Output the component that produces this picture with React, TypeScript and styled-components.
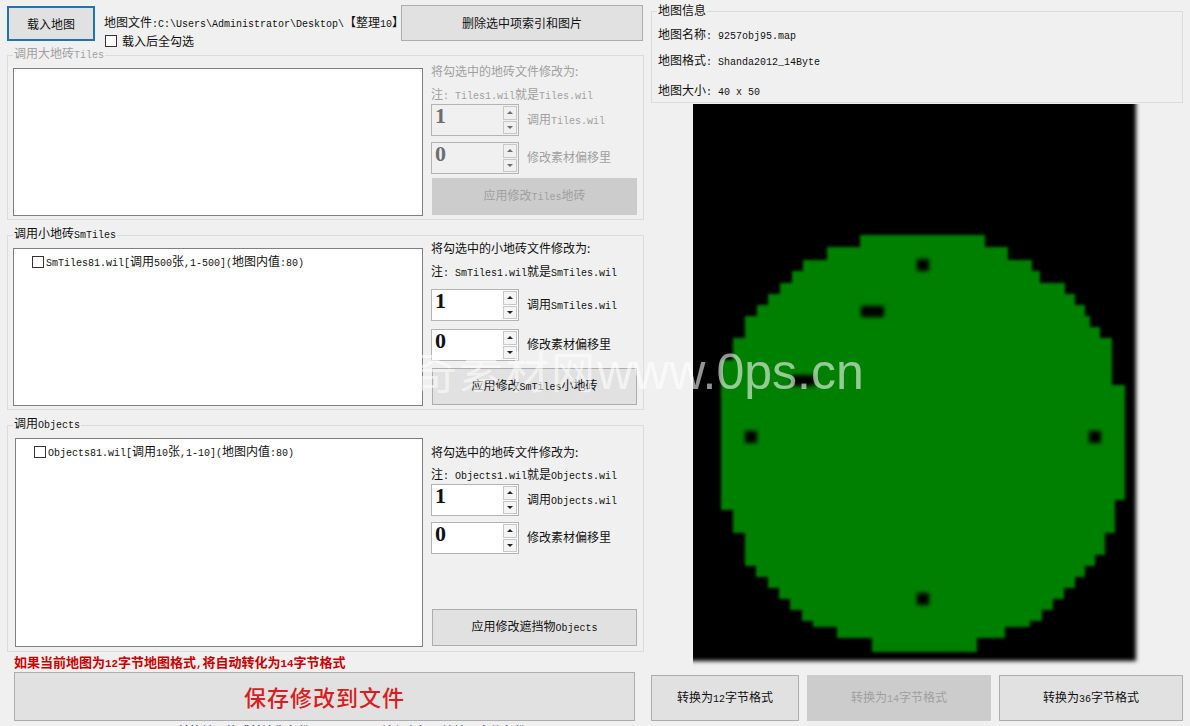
import React from "react";
import styled, { createGlobalStyle } from "styled-components";

const Global = createGlobalStyle`
  html, body { margin: 0; padding: 0; background: #f0f0f0; }
  body { font-family: "Noto Sans CJK SC", "Liberation Sans", sans-serif; font-size: 12px; color: #111; }
`;

const Root = styled.div`
  position: relative;
  width: 1190px;
  height: 726px;
  overflow: hidden;
  display: flex;
  background: #f0f0f0;
`;

const LeftColumn = styled.div`
  width: 637px;
  margin-left: 7px;
  padding-top: 5px;
  flex: none;
`;

const RightColumn = styled.div`
  width: 532px;
  margin-left: 7px;
  padding-top: 11px;
  flex: none;
`;

const TopRow = styled.div`
  display: flex;
  height: 50px;
`;

const BaseButton = styled.button<{ $w: number; $h: number; $off?: boolean }>`
  width: ${(p) => p.$w}px;
  height: ${(p) => p.$h}px;
  flex: none;
  padding: 0;
  box-sizing: border-box;
  font: inherit;
  line-height: 16px;
  background: ${(p) => (p.$off ? "#cccccc" : "#e1e1e1")};
  color: ${(p) => (p.$off ? "#a0a0a0" : "#111")};
  border: 1px solid ${(p) => (p.$off ? "#cccccc" : "#adadad")};
`;

const LoadButton = styled(BaseButton)`
  margin-top: 1px;
  border: 2px solid #1f74a8;
`;

const FileInfo = styled.div`
  width: 297px;
  margin-left: 9px;
  flex: none;
  overflow: hidden;
  white-space: nowrap;
`;

const FilePath = styled.div`
  height: 16px;
  line-height: 16px;
  margin-top: 9px;
`;

const CheckRow = styled.label`
  display: flex;
  align-items: center;
  gap: 5px;
  height: 16px;
  margin-top: 3px;
  margin-left: 1px;
`;

const CheckText = styled.span`
  margin-bottom: 2px;
`;

const Box = styled.span`
  width: 12px;
  height: 12px;
  box-sizing: border-box;
  flex: none;
  border: 1px solid #333;
  background: #fff;
`;

const Group = styled.section<{ $h: number; $off?: boolean }>`
  position: relative;
  display: flex;
  box-sizing: border-box;
  height: ${(p) => p.$h}px;
  padding-top: 1px;
  margin-bottom: 15px;
  border: 1px solid #dcdcdc;
  color: ${(p) => (p.$off ? "#a0a0a0" : "#111")};
`;

const GroupTitle = styled.div`
  position: absolute;
  left: 5px;
  top: -11px;
  padding: 0 1px;
  line-height: 16px;
  background: #f0f0f0;
`;

const InfoTitle = styled(GroupTitle)`
  top: -10px;
`;

const TreeList = styled.div<{ $h: number; $w: number; $ml: number }>`
  box-sizing: border-box;
  flex: none;
  width: ${(p) => p.$w}px;
  height: ${(p) => p.$h}px;
  margin: 11px 0 0 ${(p) => p.$ml}px;
  background: #fff;
  border: 1px solid #7f7f7f;
  padding: 6px 0 0 18px;
`;

const TreeItem = styled.div`
  display: flex;
  align-items: center;
  gap: 2px;
  height: 14px;
  color: #111;
  white-space: nowrap;
`;

const TreeText = styled.span`
  margin-bottom: 3px;
`;

const Side = styled.div`
  flex: none;
  width: 206px;
  margin-left: 8px;
  display: flex;
  flex-direction: column;
`;

const Line = styled.div<{ $mt: number }>`
  height: 16px;
  line-height: 14px;
  margin-top: ${(p) => p.$mt}px;
  white-space: nowrap;
`;

const SpinRow = styled.div<{ $mt: number }>`
  display: flex;
  align-items: center;
  gap: 8px;
  height: 32px;
  margin-top: ${(p) => p.$mt}px;
`;

const SpinLabel = styled.span`
  margin-bottom: 3px;
`;

const Spinner = styled.div<{ $off?: boolean }>`
  width: 88px;
  height: 32px;
  box-sizing: border-box;
  display: flex;
  border: 1px solid #b4b4b4;
  background: ${(p) => (p.$off ? "#f0f0f0" : "#fff")};
`;

const SpinValue = styled.div<{ $off?: boolean }>`
  flex: 1;
  padding-left: 3px;
  font-family: "Liberation Serif", serif;
  font-size: 22px;
  font-weight: 700;
  line-height: 22px;
  color: ${(p) => (p.$off ? "#6d6d6d" : "#111")};
`;

const SpinButtons = styled.div`
  width: 14px;
  margin: 1px 1px 1px 0;
  display: flex;
  flex-direction: column;
  gap: 1px;
`;

const SpinButton = styled.div<{ $off?: boolean; $down?: boolean }>`
  flex: 1;
  box-sizing: border-box;
  display: flex;
  align-items: center;
  justify-content: center;
  background: ${(p) => (p.$off ? "#f0f0f0" : "#f4f4f4")};
  border: 1px solid #c8c8c8;
  &::before {
    content: "";
    border-left: 3px solid transparent;
    border-right: 3px solid transparent;
    ${(p) => (p.$down ? "border-top" : "border-bottom")}: 3px solid ${(p) => (p.$off ? "#6d6d6d" : "#222")};
  }
`;

const ApplyButton = styled(BaseButton)<{ $mt: number }>`
  margin-top: ${(p) => p.$mt}px;
  margin-left: 1px;
`;

const Notice = styled.div`
  height: 20px;
  line-height: 20px;
  margin-top: -15px;
  margin-left: 7px;
  font-size: 13px;
  font-weight: 700;
  color: #c80000;
  white-space: nowrap;
`;

const SaveButton = styled(BaseButton)`
  display: block;
  margin-left: 7px;
  padding-bottom: 2px;
  font-size: 22px;
  font-weight: 500;
  letter-spacing: 1px;
  color: #d81e1e;
`;

const Footnote = styled.div`
  margin: 2px 0 0 171px;
  line-height: 16px;
  color: #000080;
  white-space: nowrap;
`;

const InfoGroup = styled.section`
  position: relative;
  box-sizing: border-box;
  height: 92px;
  border: 1px solid #dcdcdc;
  padding: 14px 0 0 6px;
`;

const InfoLine = styled.div<{ $mt: number }>`
  height: 16px;
  line-height: 16px;
  margin-top: ${(p) => p.$mt}px;
  white-space: nowrap;
`;

const MapSvg = styled.svg`
  display: block;
  width: 448px;
  height: 564px;
  margin: 1px 0 0 42px;
`;

const ConvertRow = styled.div`
  display: flex;
  gap: 8px;
  margin-top: 7px;
`;

const Watermark = styled.div`
  position: absolute;
  left: 413px;
  top: 340px;
  display: flex;
  align-items: baseline;
  pointer-events: none;
  color: rgba(255, 255, 255, 0.58);
  white-space: nowrap;
`;

const WatermarkCjk = styled.span`
  font-size: 44px;
  line-height: 60px;
  letter-spacing: 2px;
`;

const WatermarkLatin = styled.span`
  font-family: "Liberation Sans", sans-serif;
  font-size: 50px;
  line-height: 60px;
`;

const Latin = styled.span`
  font-family: "Liberation Mono", monospace;
  font-size: 0.834em;
  white-space: pre;
`;

const Mixed = ({ text }: { text: string }) => (
  <>
    {text.split(/([\x00-\x7f]+)/).map((part, i) =>
      /^[\x00-\x7f]+$/.test(part) ? <Latin key={i}>{part}</Latin> : part ? <span key={i}>{part}</span> : null
    )}
  </>
);

const Spin = ({ value, label, mt, off }: { value: string; label: string; mt: number; off?: boolean }) => (
  <SpinRow $mt={mt}>
    <Spinner $off={off}>
      <SpinValue $off={off}>{value}</SpinValue>
      <SpinButtons>
        <SpinButton $off={off} />
        <SpinButton $off={off} $down />
      </SpinButtons>
    </Spinner>
    <SpinLabel>
      <Mixed text={label} />
    </SpinLabel>
  </SpinRow>
);

// page-space staircase of the minimap: [top, left, right]
const rows: [number, number, number][] = [
  [235, 860, 985], [247, 827, 1008], [260, 803, 1032], [271, 792, 1040], [283, 780, 1065],
  [294, 768, 1075], [305, 757, 1085], [316, 745, 1090], [327, 745, 1100], [338, 733, 1112],
  [360, 721, 1112], [385, 721, 1125], [500, 721, 1115], [510, 733, 1115], [533, 745, 1105],
  [555, 745, 1095], [566, 756, 1085], [577, 768, 1075], [588, 779, 1064], [599, 790, 1053],
  [610, 802, 1042], [621, 813, 1030], [627, 837, 1005], [638, 872, 977],
];
const BOTTOM = 652;
const stairPoints = (() => {
  const pts: string[] = [];
  rows.forEach((r, i) => {
    const end = i + 1 < rows.length ? rows[i + 1][0] : BOTTOM;
    pts.push(`${r[2]},${r[0]}`, `${r[2]},${end}`);
  });
  for (let i = rows.length - 1; i >= 0; i--) {
    const r = rows[i];
    const end = i + 1 < rows.length ? rows[i + 1][0] : BOTTOM;
    pts.push(`${r[1]},${end}`, `${r[1]},${r[0]}`);
  }
  return pts.join(" ");
})();

const MiniMap = () => (
  <MapSvg viewBox="693 104 448 564">
    <defs>
      <filter id="edge" x="-5%" y="-5%" width="110%" height="110%">
        <feGaussianBlur stdDeviation="2" />
      </filter>
      <filter id="cell" x="-5%" y="-5%" width="110%" height="110%">
        <feGaussianBlur stdDeviation="1.4" />
      </filter>
      <filter id="dot" x="-50%" y="-50%" width="200%" height="200%">
        <feGaussianBlur stdDeviation="2" />
      </filter>
    </defs>
    <rect x="670" y="80" width="466" height="581" fill="#000" filter="url(#edge)" />
    <polygon points={stairPoints} fill="#008000" filter="url(#cell)" />
    <g fill="#000" filter="url(#dot)">
      <rect x="917" y="259" width="12" height="12" />
      <rect x="745" y="431" width="12" height="12" />
      <rect x="1089" y="431" width="12" height="12" />
      <rect x="917" y="593" width="12" height="12" />
      <rect x="861" y="306" width="23" height="11" />
      <rect x="792" y="375" width="23" height="11" />
    </g>
  </MapSvg>
);

export default function App() {
  return (
    <Root>
      <Global />
      <LeftColumn>
        <TopRow>
          <LoadButton $w={88} $h={35}>载入地图</LoadButton>
          <FileInfo>
            <FilePath>
              <Mixed text="地图文件:C:\Users\Administrator\Desktop\【整理10】地图文件夹" />
            </FilePath>
            <CheckRow>
              <Box />
              <CheckText>载入后全勾选</CheckText>
            </CheckRow>
          </FileInfo>
          <BaseButton $w={242} $h={36}>删除选中项索引和图片</BaseButton>
        </TopRow>

        <Group $h={165} $off>
          <GroupTitle><Mixed text="调用大地砖Tiles" /></GroupTitle>
          <TreeList $w={410} $h={148} $ml={5} />
          <Side>
            <Line $mt={7}>将勾选中的地砖文件修改为:</Line>
            <Line $mt={7}><Mixed text="注: Tiles1.wil就是Tiles.wil" /></Line>
            <Spin value="1" label="调用Tiles.wil" mt={1} off />
            <Spin value="0" label="修改素材偏移里" mt={6} off />
            <ApplyButton $w={205} $h={37} $mt={4} $off><Mixed text="应用修改Tiles地砖" /></ApplyButton>
          </Side>
        </Group>

        <Group $h={175}>
          <GroupTitle><Mixed text="调用小地砖SmTiles" /></GroupTitle>
          <TreeList $w={410} $h={158} $ml={5}>
            <TreeItem><Box /><TreeText><Mixed text="SmTiles81.wil[调用500张,1-500](地图内值:80)" /></TreeText></TreeItem>
          </TreeList>
          <Side>
            <Line $mt={4}>将勾选中的小地砖文件修改为:</Line>
            <Line $mt={7}><Mixed text="注: SmTiles1.wil就是SmTiles.wil" /></Line>
            <Spin value="1" label="调用SmTiles.wil" mt={9} />
            <Spin value="0" label="修改素材偏移里" mt={8} />
            <ApplyButton $w={205} $h={37} $mt={7}><Mixed text="应用修改SmTiles小地砖" /></ApplyButton>
          </Side>
        </Group>

        <Group $h={227}>
          <GroupTitle><Mixed text="调用Objects" /></GroupTitle>
          <TreeList $w={408} $h={209} $ml={7}>
            <TreeItem><Box /><TreeText><Mixed text="Objects81.wil[调用10张,1-10](地图内值:80)" /></TreeText></TreeItem>
          </TreeList>
          <Side>
            <Line $mt={18}>将勾选中的地砖文件修改为:</Line>
            <Line $mt={6}><Mixed text="注: Objects1.wil就是Objects.wil" /></Line>
            <Spin value="1" label="调用Objects.wil" mt={1} />
            <Spin value="0" label="修改素材偏移里" mt={6} />
            <ApplyButton $w={205} $h={37} $mt={55}><Mixed text="应用修改遮挡物Objects" /></ApplyButton>
          </Side>
        </Group>

        <Notice><Mixed text="如果当前地图为12字节地图格式,将自动转化为14字节格式" /></Notice>
        <SaveButton $w={621} $h={49}>保存修改到文件</SaveButton>
        <Footnote><Mixed text="转换地图格式前请先备份 www.0ps.cn 请保存好原始地图文件备份" /></Footnote>
      </LeftColumn>

      <RightColumn>
        <InfoGroup>
          <InfoTitle>地图信息</InfoTitle>
          <InfoLine $mt={0}><Mixed text="地图名称: 9257obj95.map" /></InfoLine>
          <InfoLine $mt={10}><Mixed text="地图格式: Shanda2012_14Byte" /></InfoLine>
          <InfoLine $mt={14}><Mixed text="地图大小: 40 x 50" /></InfoLine>
        </InfoGroup>
        <MiniMap />
        <ConvertRow>
          <BaseButton $w={148} $h={46}><Mixed text="转换为12字节格式" /></BaseButton>
          <BaseButton $w={184} $h={46} $off><Mixed text="转换为14字节格式" /></BaseButton>
          <BaseButton $w={184} $h={46}><Mixed text="转换为36字节格式" /></BaseButton>
        </ConvertRow>
      </RightColumn>

      <Watermark>
        <WatermarkCjk>奇素材网</WatermarkCjk>
        <WatermarkLatin>www.0ps.cn</WatermarkLatin>
      </Watermark>
    </Root>
  );
}
